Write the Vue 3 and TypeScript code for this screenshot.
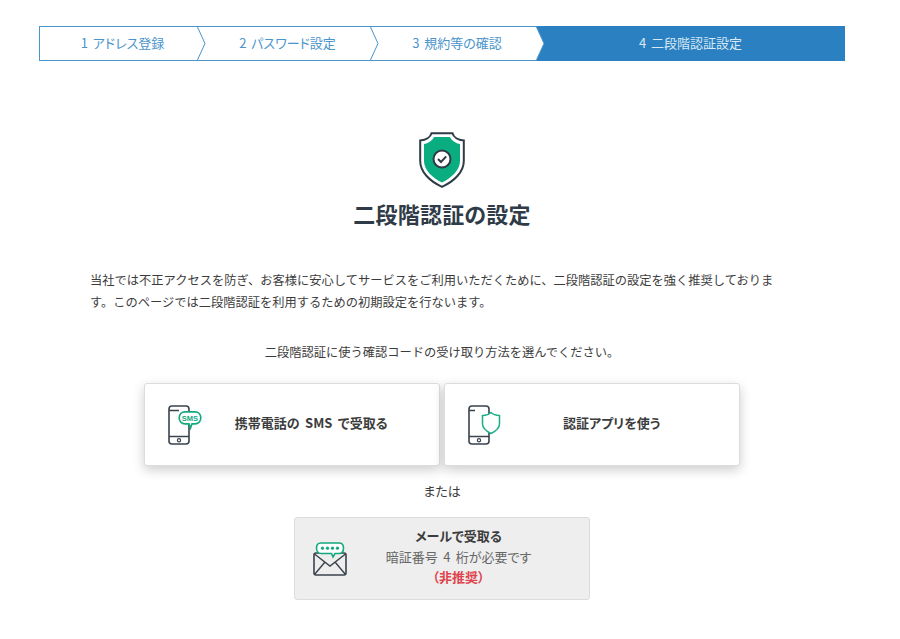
<script setup lang="ts">
// 二段階認証の設定ページ
interface Step {
  label: string
  width: number
  active?: boolean
}

const steps: Step[] = [
  { label: '1 アドレス登録', width: 158 },
  { label: '2 パスワード設定', width: 173 },
  { label: '3 規約等の確認', width: 166 },
  { label: '4 二段階認証設定', width: 309, active: true },
]
</script>

<template>
  <main class="page">
    <!-- ステップ -->
    <ol class="steps">
      <li
        v-for="(step, i) in steps"
        :key="step.label"
        class="step"
        :class="{ active: step.active }"
        :style="{ width: step.width + 'px' }"
      >
        <span class="step-label">{{ step.label }}</span>
        <svg v-if="i < steps.length - 1" class="chevron" width="9" height="35" viewBox="0 0 9 35">
          <path d="M0 0 L8 17.5 L0 35" fill="#fff" stroke="#4a94cc" stroke-width="1" />
        </svg>
      </li>
    </ol>

    <!-- 見出し -->
    <section class="heading">
      <svg class="shield" width="46" height="56" viewBox="0 0 46 56">
        <path
          d="M12.5 1.2 H33.5 C34.5 5 39 8 44.8 8.4 V29 C44.8 40 35 49.5 23 54.8 C11 49.5 1.2 40 1.2 29 V8.4 C7 8 11.5 5 12.5 1.2 Z"
          fill="#fff"
          stroke="#2f3b47"
          stroke-width="2"
        />
        <path
          d="M15 5 H31 C33 9 37 11.5 41 12 V29 C41 38 32.5 46 23 50.5 C13.5 46 5 38 5 29 V12 C9 11.5 13 9 15 5 Z"
          fill="#0aad80"
        />
        <circle cx="23" cy="27" r="8.5" fill="#fff" stroke="#2f3b47" stroke-width="2" />
        <path d="M19 27 L22 30 L27.2 24.4" fill="none" stroke="#2f3b47" stroke-width="2" />
      </svg>
      <h1 class="title">二段階認証の設定</h1>
    </section>

    <p class="lead">
      当社では不正アクセスを防ぎ、お客様に安心してサービスをご利用いただくために、二段階認証の設定を強く推奨しております。このページでは二段階認証を利用するための初期設定を行ないます。
    </p>
    <p class="prompt">二段階認証に使う確認コードの受け取り方法を選んでください。</p>

    <!-- 受け取り方法 -->
    <div class="methods">
      <button class="method" type="button">
        <svg class="method-icon" width="34" height="40" viewBox="0 0 34 40">
          <rect x="1" y="1" width="20" height="38" rx="3" fill="#fff" stroke="#3a434e" stroke-width="1.6" />
          <path d="M1 5.5 H11 M1 31.5 H21" stroke="#3a434e" stroke-width="1.4" fill="none" />
          <circle cx="11" cy="35.3" r="1.6" fill="none" stroke="#3a434e" stroke-width="1.2" />
          <path
            d="M17 6.8 H27 C30.5 6.8 32.8 9.4 32.8 12.8 C32.8 16.2 30.5 18.8 27 18.8 H24 L22.5 23 L21 18.8 H17 C13.5 18.8 11.2 16.2 11.2 12.8 C11.2 9.4 13.5 6.8 17 6.8 Z"
            fill="#fff"
            stroke="#12a97f"
            stroke-width="1.7"
          />
          <text x="22" y="15.5" class="sms">SMS</text>
        </svg>
        <span class="method-label">携帯電話の SMS で受取る</span>
      </button>
      <button class="method" type="button">
        <svg class="method-icon" width="34" height="40" viewBox="0 0 34 40">
          <rect x="1" y="1" width="20" height="38" rx="3" fill="#fff" stroke="#3a434e" stroke-width="1.6" />
          <path d="M1 5.5 H7 M1 31.5 H21" stroke="#3a434e" stroke-width="1.4" fill="none" />
          <circle cx="11" cy="35.3" r="1.6" fill="none" stroke="#3a434e" stroke-width="1.2" />
          <path
            d="M23 7.5 C24.8 9.3 28 10.4 31.5 10.6 V19 C31.5 23 28 26 23 28.5 C18 26 14.5 23 14.5 19 V10.6 C18 10.4 21.2 9.3 23 7.5 Z"
            fill="#fff"
            stroke="#1aae86"
            stroke-width="1.5"
          />
        </svg>
        <span class="method-label">認証アプリを使う</span>
      </button>
    </div>

    <p class="or">または</p>

    <button class="method method-mail" type="button">
      <svg class="method-icon" width="34" height="34" viewBox="0 0 34 34">
        <rect x="1" y="11" width="32" height="22" rx="2" fill="#eee" stroke="#3a434e" stroke-width="1.6" />
        <path d="M1.5 12 L17 24 L32.5 12 M1.5 32.5 L12 20 M32.5 32.5 L22 20" fill="none" stroke="#3a434e" stroke-width="1.4" />
        <path
          d="M8 1 H26 C29 1 30.5 3 30.5 6 C30.5 9 29 11.5 26 11.5 H22 L20 15 L18.5 11.5 H8 C5 11.5 3.5 9 3.5 6 C3.5 3 5 1 8 1 Z"
          fill="#fff"
          stroke="#12a97f"
          stroke-width="1.6"
        />
        <circle cx="9.5" cy="6.2" r="1.6" fill="#12a97f" />
        <circle cx="14.5" cy="6.2" r="1.6" fill="#12a97f" />
        <circle cx="19.5" cy="6.2" r="1.6" fill="#12a97f" />
        <circle cx="24.5" cy="6.2" r="1.6" fill="#12a97f" />
      </svg>
      <span class="method-label mail-label">
        <strong>メールで受取る</strong>
        <span>暗証番号 4 桁が必要です</span>
        <strong class="warn">（非推奨）</strong>
      </span>
    </button>
  </main>
</template>

<style>
body {
  margin: 0;
  background: #fff;
}
</style>

<style scoped>
.page {
  width: 806px;
  margin-left: 39px;
  padding-top: 26px;
  display: flex;
  flex-direction: column;
  align-items: center;
  font-family: "Noto Sans CJK JP", "Noto Sans", sans-serif;
  font-size: 13px;
  font-feature-settings: "palt";
  word-spacing: 2px;
  color: #3c3c3c;
}

.steps {
  width: 100%;
  height: 35px;
  margin: 0;
  padding: 0;
  box-sizing: border-box;
  list-style: none;
  display: flex;
}

.step {
  position: relative;
  box-sizing: border-box;
  display: flex;
  align-items: center;
  justify-content: center;
  border: 1px solid #4a94cc;
  border-width: 1px 0;
  color: #4a94cc;
  padding-left: 8px;
}

.step:first-child {
  border-left-width: 1px;
}

.step.active {
  background: #2a80c0;
  border-color: #2a80c0;
  color: #d8e8f4;
  padding-left: 0;
}

.step-label {
  margin-top: -2px;
}

.chevron {
  position: absolute;
  top: -1px;
  left: 100%;
  z-index: 1;
}

.heading {
  margin-top: 71px;
  display: flex;
  flex-direction: column;
  align-items: center;
}

.shield {
  display: block;
}

.title {
  margin: 9px 0 0;
  font-size: 22px;
  line-height: 32px;
  letter-spacing: 0.2px;
  font-weight: 700;
  color: #2f3b47;
}

.lead,
.prompt {
  font-size: 12.25px;
  font-feature-settings: normal;
  line-height: 22px;
}

.lead {
  margin: 40px 0 0;
  width: 704px;
}

.prompt {
  margin: 28px 0 0;
}

.methods {
  margin-top: 20px;
  display: flex;
  gap: 4.5px;
}

.method {
  width: 296px;
  height: 83px;
  box-sizing: border-box;
  padding: 0 20px 0 23px;
  display: flex;
  align-items: center;
  background: #fff;
  border: 1px solid #dcdcdc;
  border-radius: 3px;
  box-shadow: 0 4px 12px rgba(0, 0, 0, 0.2);
  font: inherit;
  font-feature-settings: inherit;
  word-spacing: 2.5px;
  color: inherit;
}

.method-icon {
  flex: none;
  display: block;
}

.method-label {
  flex: 1;
  margin: -5px 0 0 2px;
  text-align: center;
  font-weight: 700;
}

.or {
  margin: 15px 0 0;
  line-height: 20px;
}

.method-mail {
  margin-top: 16px;
  height: 83px;
  padding-left: 18px;
  background: #eee;
  box-shadow: none;
}

.mail-label {
  display: flex;
  flex-direction: column;
  margin: -3px 0 0 1px;
  font-weight: 400;
  line-height: 20.5px;
  color: #666;
}

.mail-label strong {
  color: #3c3c3c;
}

.mail-label .warn {
  color: #e0434b;
}

.sms {
  font-family: "Liberation Sans", sans-serif;
  font-size: 7.5px;
  font-weight: 700;
  fill: #12a97f;
  text-anchor: middle;
}
</style>
